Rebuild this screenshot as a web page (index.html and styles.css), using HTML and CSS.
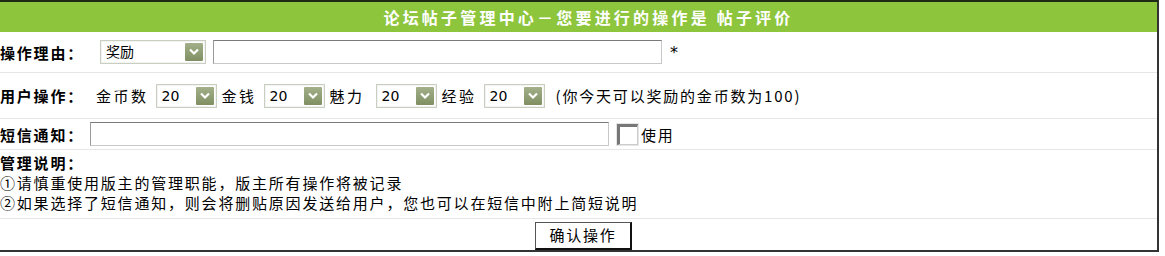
FILE: index.html
```html
<!DOCTYPE html>
<html lang="zh-CN">
<head>
    <meta charset="UTF-8">
    <title>论坛帖子管理中心</title>
    <link rel="stylesheet" href="styles.css">
</head>
<body>
    <div class="panel">
        <div class="head">论坛帖子管理中心－您要进行的操作是 帖子评价</div>

        <div class="row row-reason">
            <b class="label">操作理由：</b>
            <span class="sel sel-wide">奖励<span class="arr"><svg width="10" height="8" viewBox="0 0 10 8"><path d="M1 1.5 L5 5.5 L9 1.5" fill="none" stroke="#fff" stroke-width="2.2"/></svg></span></span>
            <span class="txt txt-reason"></span>
            <span class="star">*</span>
        </div>

        <div class="row row-user">
            <b class="label">用户操作：</b>
            <span class="word">金币数</span>
            <span class="sel">20<span class="arr"><svg width="10" height="8" viewBox="0 0 10 8"><path d="M1 1.5 L5 5.5 L9 1.5" fill="none" stroke="#fff" stroke-width="2.2"/></svg></span></span>
            <span class="word">金钱</span>
            <span class="sel">20<span class="arr"><svg width="10" height="8" viewBox="0 0 10 8"><path d="M1 1.5 L5 5.5 L9 1.5" fill="none" stroke="#fff" stroke-width="2.2"/></svg></span></span>
            <span class="word word-wide">魅力</span>
            <span class="sel">20<span class="arr"><svg width="10" height="8" viewBox="0 0 10 8"><path d="M1 1.5 L5 5.5 L9 1.5" fill="none" stroke="#fff" stroke-width="2.2"/></svg></span></span>
            <span class="word">经验</span>
            <span class="sel">20<span class="arr"><svg width="10" height="8" viewBox="0 0 10 8"><path d="M1 1.5 L5 5.5 L9 1.5" fill="none" stroke="#fff" stroke-width="2.2"/></svg></span></span>
            <span class="hint">(你今天可以奖励的金币数为100)</span>
        </div>

        <div class="row row-sms">
            <b class="label label-tight">短信通知：</b>
            <span class="txt txt-sms"></span>
            <span class="check"></span>
            <span class="use">使用</span>
        </div>

        <div class="row row-note">
            <b class="label">管理说明：</b>
            <div>①请慎重使用版主的管理职能，版主所有操作将被记录</div>
            <div>②如果选择了短信通知，则会将删贴原因发送给用户，您也可以在短信中附上简短说明</div>
        </div>

        <div class="row row-submit">
            <span class="btn">确认操作</span>
        </div>
    </div>
</body>
</html>
```

FILE: styles.css
```css
body {
    margin: 0;
    background: #fff;
    color: #000;
    font-family: "Noto Sans CJK SC", "DejaVu Sans", sans-serif;
    font-size: 15px;
}

.panel {
    width: 1157px;
    border-top: 2px solid #1f2a14;
    border-right: 2px solid #333;
    border-bottom: 2px solid #333;
}

.head {
    height: 30px;
    line-height: 30px;
    background-color: #8dc53c;
    color: #fff;
    font-weight: bold;
    font-size: 16px;
    text-align: center;
    letter-spacing: 3.2px;
    padding-left: 20px;
}

.row {
    display: flex;
    align-items: center;
    border-top: 1px solid #e6e6e6;
    letter-spacing: 1.8px;
}

.label {
    font-weight: bold;
    width: 96px;
    flex-shrink: 0;
    white-space: nowrap;
}

.label-tight {
    width: 90px;
}

.row-reason {
    height: 40px;
    border-top: none;
}

.row-user {
    height: 45px;
}

.row-user .word {
    margin-right: 7px;
    letter-spacing: 2.5px;
}

.row-user .word-wide {
    margin-right: 11px;
}

.row-user .sel {
    margin-right: 5px;
}

.row-user .hint {
    margin-left: 6px;
}

.row-sms {
    height: 30px;
}

.row-note {
    height: 69px;
    display: block;
    line-height: 20px;
    padding-top: 3px;
    box-sizing: border-box;
}

.row-note .label {
    display: block;
}

.row-submit {
    height: 31px;
    justify-content: center;
    align-items: flex-end;
}

.sel {
    display: inline-flex;
    align-items: center;
    justify-content: space-between;
    box-sizing: border-box;
    width: 61px;
    height: 24px;
    padding: 0 2px 0 5px;
    border: 1px solid #c9cfc0;
    box-shadow: inset 0 0 0 1px #f3f3f3;
    font-family: "DejaVu Sans", sans-serif;
    font-size: 14px;
    letter-spacing: 0;
}

.sel-wide {
    width: 106px;
    margin-left: 4px;
    font-family: "Noto Sans CJK SC", sans-serif;
    align-items: flex-start;
    line-height: 20px;
}

.sel-wide .arr {
    margin-top: 2px;
}

.arr {
    display: inline-flex;
    align-items: center;
    justify-content: center;
    width: 18px;
    height: 18px;
    background: linear-gradient(#a3b08a, #7f8f62);
    border-radius: 1px;
}

.txt {
    display: inline-block;
    box-sizing: border-box;
    height: 24px;
    border: 1px solid #9a9a9a;
    border-top-color: #7a7a7a;
    border-bottom-color: #c8c8c8;
    border-right-color: #c8c8c8;
}

.txt-reason {
    width: 449px;
    margin-left: 7px;
}

.star {
    margin-left: 8px;
    font-size: 16px;
    font-family: "DejaVu Sans", sans-serif;
}

.txt-sms {
    width: 519px;
}

.check {
    display: inline-block;
    box-sizing: border-box;
    width: 21px;
    height: 21px;
    margin-left: 8px;
    border: 1px solid #ccc;
    border-top: 3px solid #777;
    border-left: 3px solid #777;
    background: #fff;
    box-shadow: 0 0 0 1px #e5e5e5;
}

.use {
    margin-left: 3px;
}

.btn {
    display: inline-block;
    box-sizing: border-box;
    width: 97px;
    height: 28px;
    line-height: 24px;
    text-align: center;
    border: 1px solid #555;
    border-right: 2px solid #111;
    border-bottom: 2px solid #111;
    background: #fff;
    margin-left: 10px;
}
```
